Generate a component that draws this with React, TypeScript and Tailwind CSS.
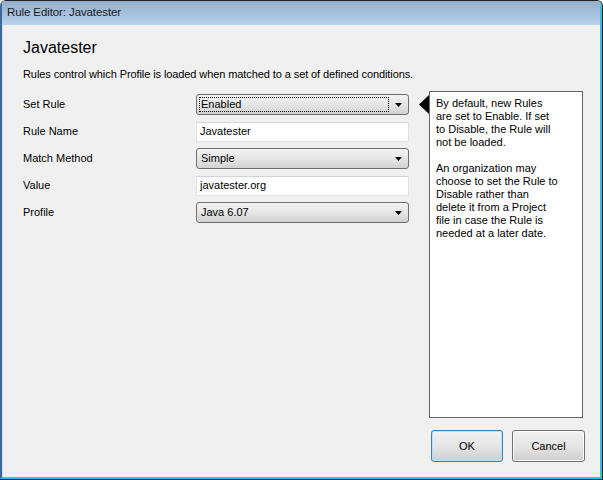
import React from "react";

const font = { fontFamily: '"Liberation Sans", Arial, sans-serif' };

function Select({ value, focused }: { value: string; focused?: boolean }) {
  return (
    <div className="relative flex h-[21px] w-[213px] items-center rounded-[3px] border border-[#707070] bg-gradient-to-b from-[#f2f2f2] via-[#e6e6e6] to-[#d2d2d2] pl-[2px]">
      <div className={`flex h-[15px] w-[190px] items-center pl-[1px] ${focused ? "border border-dotted border-black" : "border border-transparent"}`}>
        <span className="text-[11px] leading-none text-black">{value}</span>
      </div>
      <svg className="absolute right-[6px] top-[8px]" width="7" height="4" viewBox="0 0 7 4">
        <path d="M0 0h7L3.5 4z" fill="#000" />
      </svg>
    </div>
  );
}

function TextBox({ value }: { value: string }) {
  return (
    <div className="flex h-[20px] w-[213px] items-center border border-[#dfe3e8] border-t-[#cfd4da] bg-white pl-[3px]">
      <span className="text-[11px] leading-none text-black">{value}</span>
    </div>
  );
}

const rows: { label: string; control: React.ReactNode }[] = [
  { label: "Set Rule", control: <Select value="Enabled" focused /> },
  { label: "Rule Name", control: <TextBox value="Javatester" /> },
  { label: "Match Method", control: <Select value="Simple" /> },
  { label: "Value", control: <TextBox value="javatester.org" /> },
  { label: "Profile", control: <Select value="Java 6.07" /> },
];

export default function App() {
  return (
    <div style={font} className="flex h-[480px] w-[603px] flex-col overflow-hidden rounded-t-[6px] border-t border-r border-b border-[#222] bg-[#f0f0f0]">
      <div className="flex flex-1 flex-col border-l-2 border-r-2 border-b-2 border-l-[#3d6a9e] border-r-[#35bde4] border-b-[#2fc0e6]">
        <div className="flex h-[24px] shrink-0 items-center bg-gradient-to-b from-[#95aecb] to-[#b9d1ea] pl-[5px]">
          <span className="text-[11.5px] tracking-[-0.1px] text-[#1b1b1b]">Rule Editor: Javatester</span>
        </div>
        <div className="flex flex-1 flex-col border-l border-[#c9dcef] pl-[20px] pr-[17px]">
          <h1 className="mt-[12px] h-[22px] text-[16px] leading-[22px] text-black">Javatester</h1>
          <p className="mt-[8px] h-[14px] text-[11px] leading-[14px] tracking-[-0.09px] text-black">
            Rules control which Profile is loaded when matched to a set of defined conditions.
          </p>
          <div className="mt-[10px] flex">
            <div className="flex w-[396px] flex-col">
              {rows.map((r) => (
                <div key={r.label} className="flex h-[27px] items-center">
                  <span className="w-[173px] text-[11px] text-black">{r.label}</span>
                  {r.control}
                </div>
              ))}
            </div>
            <div className="flex">
              <svg className="mt-[4px]" width="10" height="19" viewBox="0 0 10 19">
                <path d="M10 0v19L0 9.5z" fill="#000" />
              </svg>
              <div className="h-[327px] w-[154px] border border-[#646464] bg-white pl-[6px] pt-[5px] text-[11px] leading-[13px] text-black">
                <p>
                  By default, new Rules
                  <br />
                  are set to Enable. If set
                  <br />
                  to Disable, the Rule will
                  <br />
                  not be loaded.
                </p>
                <p className="mt-[13px]">
                  An organization may
                  <br />
                  choose to set the Rule to
                  <br />
                  Disable rather than
                  <br />
                  delete it from a Project
                  <br />
                  file in case the Rule is
                  <br />
                  needed at a later date.
                </p>
              </div>
            </div>
          </div>
          <div className="-mr-[2px] mt-[12px] flex justify-end gap-[9px]">
            <button className="h-[32px] w-[72px] rounded-[3px] border border-[#3c7fb1] bg-gradient-to-b from-[#f2f2f2] via-[#e5e5e5] to-[#cfcfcf] text-[11px] text-black shadow-[inset_0_0_0_1px_#b9e1f7]">
              OK
            </button>
            <button className="h-[32px] w-[73px] rounded-[3px] border border-[#707070] bg-gradient-to-b from-[#f2f2f2] via-[#e5e5e5] to-[#cfcfcf] text-[11px] text-black shadow-[inset_0_0_0_1px_#fcfcfc]">
              Cancel
            </button>
          </div>
        </div>
      </div>
    </div>
  );
}
